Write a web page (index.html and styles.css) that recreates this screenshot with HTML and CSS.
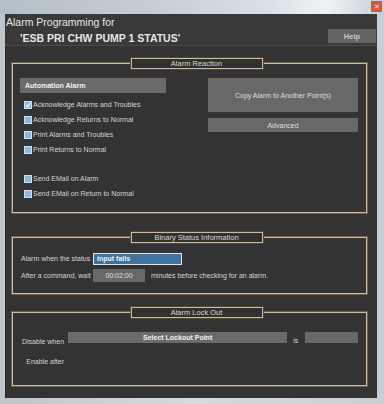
FILE: index.html
```html
<!DOCTYPE html>
<html>
<head>
    <meta charset="utf-8">
    <title>Alarm Programming</title>
    <link rel="stylesheet" href="styles.css">
</head>
<body>
    <div class="window">
        <div class="titlebar">
            <span class="close">&#x2715;</span>
        </div>

        <div class="client">
            <div class="header">
                <div class="title">
                    <div class="title-line">Alarm Programming for</div>
                    <div class="title-point">'ESB PRI CHW PUMP 1 STATUS'</div>
                </div>
                <button class="btn help">Help</button>
            </div>

            <fieldset class="group reaction">
                <legend>Alarm Reaction</legend>
                <div class="reaction-cols">
                    <div class="reaction-left">
                        <div class="bar">Automation Alarm</div>
                        <label class="check">
                            <span class="box">
                                <svg width="6" height="6" viewBox="0 0 6 6"><path d="M0.8 3.1 L2.4 4.7 L5.3 1.2" fill="none" stroke="#f4f8fc" stroke-width="1.3"/></svg>
                            </span>Acknowledge Alarms and Troubles
                        </label>
                        <label class="check"><span class="box"></span>Acknowledge Returns to Normal</label>
                        <label class="check"><span class="box"></span>Print Alarms and Troubles</label>
                        <label class="check"><span class="box"></span>Print Returns to Normal</label>
                        <div class="spacer"></div>
                        <label class="check"><span class="box"></span>Send EMail on Alarm</label>
                        <label class="check"><span class="box"></span>Send EMail on Return to Normal</label>
                    </div>
                    <div class="reaction-right">
                        <button class="btn copy">Copy Alarm to Another Point(s)</button>
                        <button class="btn advanced">Advanced</button>
                    </div>
                </div>
            </fieldset>

            <fieldset class="group binary">
                <legend>Binary Status Information</legend>
                <div class="binary-rows">
                    <div class="field-row">
                        <span class="field-label">Alarm when the status</span>
                        <span class="status-input">input fails</span>
                    </div>
                    <div class="field-row">
                        <span class="field-label">After a command, wait</span>
                        <span class="time-box">00:02:00</span>
                        <span class="after-text">minutes before checking for an alarm.</span>
                    </div>
                </div>
            </fieldset>

            <fieldset class="group lockout">
                <legend>Alarm Lock Out</legend>
                <div class="lockout-rows">
                    <div class="lock-row">
                        <span class="lock-label">Disable when</span>
                        <span class="bar select-bar">Select Lockout Point</span>
                        <span class="is-text">is</span>
                        <span class="value-box"></span>
                    </div>
                    <div class="lock-row second">
                        <span class="lock-label">Enable after</span>
                    </div>
                </div>
            </fieldset>
        </div>
    </div>
</body>
</html>
```

FILE: styles.css
```css
body {
    margin: 0;
    font-family: "Liberation Sans", Arial, sans-serif;
    font-size: 7px;
    color: #d4d4d4;
}

.window {
    display: flex;
    flex-direction: column;
    width: 384px;
    height: 404px;
    background: linear-gradient(to right, #bfc5c9, #d6dadd 50%, #c9ced2);
}

.titlebar {
    position: relative;
    height: 14px;
    background: linear-gradient(to right, #b3bfc8, #c4ced6 40%, #d9e1e7 70%, #eef2f5 85%, #c5d0d8);
}
.close {
    position: absolute;
    right: 2px;
    top: 1px;
    width: 11px;
    height: 11px;
    background: #cf5a44;
    color: #fbe3dc;
    font-size: 7px;
    line-height: 11px;
    text-align: center;
}

.client {
    flex: 1;
    margin: 0 7px 6px 5px;
    background: #333333;
    box-shadow: inset 1px 0 0 #262626;
}

/* header */
.header {
    display: flex;
    justify-content: space-between;
    height: 31px;
    background: #393939;
    border-bottom: 1px solid #4a4a4a;
}
.title {
    padding: 2px 0 0 1px;
    color: #e6e6e6;
    font-size: 10.5px;
    line-height: 13px;
}
.title-point {
    margin: 3px 0 0 14px;
    font-weight: bold;
}

.btn {
    display: block;
    border: none;
    padding: 0;
    background: #686868;
    color: #dedede;
    font-family: "Liberation Sans", Arial, sans-serif;
    font-size: 7px;
}
.help {
    width: 48px;
    height: 14px;
    margin: 15px 1px 0 0;
    background: #646464;
    font-size: 7.5px;
    font-weight: bold;
    color: #c8c8c8;
}

/* groups */
.group {
    min-width: 0;
    margin: 12px 10px 0 7px;
    padding: 0;
    border: 1px solid #cbbd9e;
    box-shadow: 0 0 0 1px #6e604b;
}
.group legend {
    box-sizing: border-box;
    width: 132px;
    height: 11px;
    margin-left: 7px;
    padding: 0;
    border: 1px solid #cbbd9e;
    box-shadow: 0 0 0 1px #4e4538;
    background: #313131;
    color: #d6d6d6;
    font-size: 7.5px;
    line-height: 9px;
    text-align: center;
}
.binary {
    margin-top: 19px;
}
.lockout {
    margin-top: 13px;
}

.bar {
    display: block;
    background: #6a6a6a;
    color: #f2f2f2;
    font-weight: bold;
}

/* alarm reaction */
.reaction-cols {
    display: flex;
    padding: 9px 8px 11px 7px;
}
.reaction-left {
    width: 146px;
}
.reaction-left .bar {
    height: 15px;
    margin-bottom: 4px;
    padding-left: 5px;
    line-height: 15px;
}
.check {
    display: flex;
    align-items: center;
    height: 15px;
    white-space: nowrap;
}
.box {
    box-sizing: border-box;
    display: flex;
    align-items: center;
    justify-content: center;
    width: 8px;
    height: 8px;
    margin: 0 1px 0 4px;
    border: 1px solid #cfe0ee;
    background: #8fb7d9;
}
.spacer {
    height: 14px;
}
.reaction-right {
    width: 150px;
    margin-left: auto;
}
.copy {
    width: 150px;
    height: 34px;
}
.advanced {
    width: 150px;
    height: 14px;
    margin-top: 6px;
}

/* binary status */
.binary-rows {
    padding: 9px 8px 11px 8px;
}
.field-row {
    display: flex;
    align-items: center;
    height: 13px;
    white-space: nowrap;
}
.field-row + .field-row {
    margin-top: 4px;
}
.field-label {
    width: 72px;
}
.status-input {
    box-sizing: border-box;
    width: 89px;
    height: 12px;
    padding-left: 3px;
    border: 1px solid #dde7f0;
    background: #3f729d;
    color: #eef3f8;
    font-weight: bold;
    line-height: 10px;
}
.time-box {
    width: 52px;
    height: 13px;
    background: #686868;
    color: #e0e0e0;
    line-height: 13px;
    text-align: center;
}
.after-text {
    margin-left: 6px;
}

/* lock out */
.lockout-rows {
    padding: 14px 8px 17px 9px;
}
.lock-row {
    display: flex;
    align-items: flex-start;
    white-space: nowrap;
}
.lock-row.second {
    margin-top: 4px;
}
.lock-label {
    width: 42px;
    padding-top: 3px;
    line-height: 13px;
    text-align: right;
}
.select-bar {
    width: 220px;
    height: 11px;
    margin-left: 4px;
    line-height: 11px;
    text-align: center;
}
.is-text {
    width: 12px;
    margin-left: 6px;
    padding-top: 2px;
    line-height: 13px;
}
.value-box {
    width: 53px;
    height: 11px;
    background: #686868;
}
```
